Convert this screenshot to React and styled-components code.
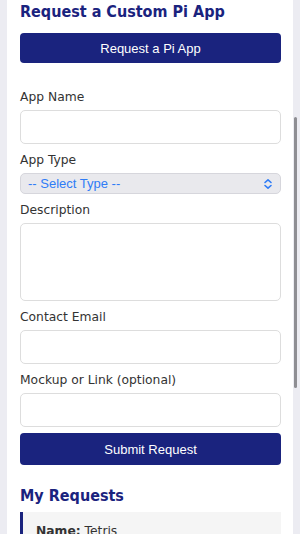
import React from "react";
import styled, { createGlobalStyle } from "styled-components";

const GlobalStyle = createGlobalStyle`
  html, body {
    margin: 0;
    padding: 0;
    background: #ececf2;
    overflow: hidden;
  }
  * {
    box-sizing: border-box;
  }
`;

const Page = styled.div`
  height: 534px;
  padding: 0 7px;
  position: relative;
`;

const Card = styled.div`
  background: #ffffff;
  height: 100%;
  padding: 2px 12px 0 13px;
  font-family: "DejaVu Sans", Verdana, sans-serif;
`;

const Title = styled.h2`
  margin: 0;
  font-family: "DejaVu Sans Condensed", "DejaVu Sans", Verdana, sans-serif;
  font-stretch: condensed;
  font-size: 16px;
  line-height: 20px;
  font-weight: bold;
  color: #1a237e;
`;

const Button = styled.button`
  display: block;
  width: 100%;
  height: ${(p) => (p.$tall ? 32 : 30)}px;
  margin-top: ${(p) => p.$mt || 0}px;
  border: none;
  border-radius: 4px;
  background: #1a237e;
  color: #ffffff;
  font-family: "Liberation Sans", Arial, sans-serif;
  font-size: 13px;
  font-weight: 500;
  cursor: pointer;
`;

const Form = styled.form`
  margin-top: 26px;
`;

const Label = styled.label`
  display: block;
  font-size: 12.3px;
  line-height: 16px;
  color: #333333;
  margin-bottom: 5px;
`;

const Input = styled.input`
  display: block;
  width: 100%;
  height: 34px;
  margin-bottom: ${(p) => (p.$last ? 6 : 8)}px;
  border: 1px solid #dddddd;
  border-radius: 5px;
  background: #ffffff;
  font-size: 13px;
`;

const TextArea = styled.textarea`
  display: block;
  width: 100%;
  height: 78px;
  margin-bottom: 8px;
  border: 1px solid #dddddd;
  border-radius: 5px;
  resize: none;
`;

const SelectBox = styled.div`
  display: flex;
  align-items: center;
  justify-content: space-between;
  height: 21px;
  margin-bottom: 8px;
  padding: 0 7px;
  border: 1px solid #d6d6dc;
  border-radius: 5px;
  background: #e9e9ed;
  color: #2f7cf6;
  font-family: "Liberation Sans", Arial, sans-serif;
  font-size: 13px;
`;

const SectionTitle = styled(Title)`
  margin-top: 21px;
`;

const RequestItem = styled.div`
  margin-top: 6px;
  background: #f5f5f5;
  border-left: 3px solid #1a237e;
  padding: 12px 13px;
  font-size: 12.3px;
  color: #333333;
`;

const Scrollbar = styled.div`
  position: absolute;
  right: 3px;
  top: 117px;
  width: 3px;
  height: 271px;
  border-radius: 2px;
  background: #8e8e93;
`;

const Chevrons = () => (
  <svg width="10" height="12" viewBox="0 0 10 12" fill="none">
    <path
      d="M2 4.5 L5 1.8 L8 4.5 M2 7.5 L5 10.2 L8 7.5"
      stroke="#2f7cf6"
      strokeWidth="1.6"
      strokeLinecap="round"
      strokeLinejoin="round"
    />
  </svg>
);

export default function App() {
  return (
    <>
      <GlobalStyle />
      <Page>
        <Card>
          <Title>Request a Custom Pi App</Title>
          <Button type="button" $mt={11}>
            Request a Pi App
          </Button>
          <Form onSubmit={(e) => e.preventDefault()}>
            <Label>App Name</Label>
            <Input type="text" />
            <Label>App Type</Label>
            <SelectBox>
              <span>-- Select Type --</span>
              <Chevrons />
            </SelectBox>
            <Label>Description</Label>
            <TextArea />
            <Label>Contact Email</Label>
            <Input type="email" />
            <Label>Mockup or Link (optional)</Label>
            <Input type="text" $last />
            <Button type="submit" $tall>
              Submit Request
            </Button>
          </Form>
          <SectionTitle>My Requests</SectionTitle>
          <RequestItem>
            <b>Name:</b> Tetris
          </RequestItem>
        </Card>
        <Scrollbar />
      </Page>
    </>
  );
}
